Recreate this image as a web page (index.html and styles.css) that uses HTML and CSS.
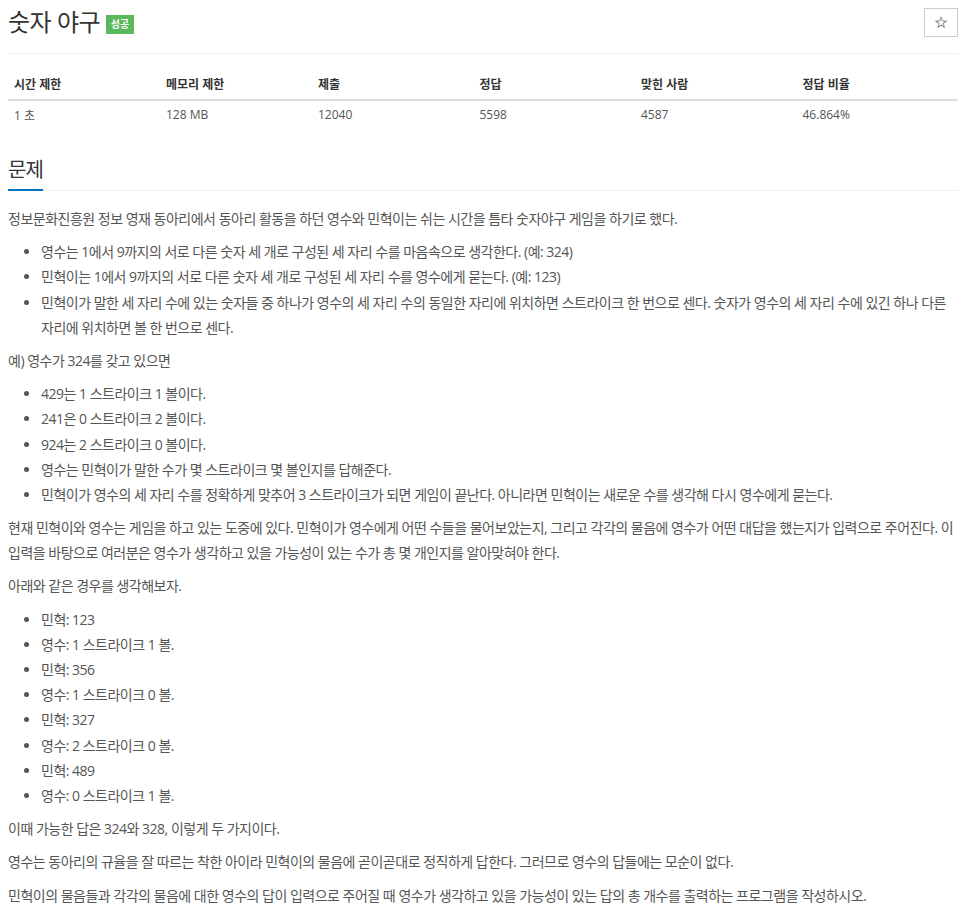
FILE: index.html
```html
<!DOCTYPE html>
<html lang="ko">
<head>
    <meta charset="UTF-8">
    <meta name="viewport" content="width=device-width, initial-scale=1.0">
    <title>숫자 야구</title>
    <link rel="stylesheet" href="styles.css">
</head>
<body>
    <div class="page">
        <div class="page-header">
            <h1 class="title">숫자 야구 <span class="badge">성공</span></h1>
            <button class="star" type="button">&#9734;</button>
        </div>

        <table class="info">
            <thead>
                <tr>
                    <th class="w16">시간 제한</th>
                    <th class="w16">메모리 제한</th>
                    <th class="w17">제출</th>
                    <th class="w17">정답</th>
                    <th class="w17">맞힌 사람</th>
                    <th class="w17">정답 비율</th>
                </tr>
            </thead>
            <tbody>
                <tr>
                    <td>1 초 </td>
                    <td>128 MB</td>
                    <td>12040</td>
                    <td>5598</td>
                    <td>4587</td>
                    <td>46.864%</td>
                </tr>
            </tbody>
        </table>

        <section class="problem">
            <div class="headline">
                <h2>문제</h2>
            </div>
            <div class="problem-text">
                <p>정보문화진흥원 정보 영재 동아리에서 동아리 활동을 하던 영수와 민혁이는 쉬는 시간을 틈타 숫자야구 게임을 하기로 했다.</p>
                <ul>
                    <li>영수는 1에서 9까지의 서로 다른 숫자 세 개로 구성된 세 자리 수를 마음속으로 생각한다. (예: 324)</li>
                    <li>민혁이는 1에서 9까지의 서로 다른 숫자 세 개로 구성된 세 자리 수를 영수에게 묻는다. (예: 123)</li>
                    <li>민혁이가 말한 세 자리 수에 있는 숫자들 중 하나가 영수의 세 자리 수의 동일한 자리에 위치하면 스트라이크 한 번으로 센다. 숫자가 영수의 세 자리 수에 있긴 하나 다른 자리에 위치하면 볼 한 번으로 센다.</li>
                </ul>
                <p>예) 영수가 324를 갖고 있으면</p>
                <ul>
                    <li>429는 1 스트라이크 1 볼이다.</li>
                    <li>241은 0 스트라이크 2 볼이다.</li>
                    <li>924는 2 스트라이크 0 볼이다.</li>
                    <li>영수는 민혁이가 말한 수가 몇 스트라이크 몇 볼인지를 답해준다.</li>
                    <li>민혁이가 영수의 세 자리 수를 정확하게 맞추어 3 스트라이크가 되면 게임이 끝난다. 아니라면 민혁이는 새로운 수를 생각해 다시 영수에게 묻는다.</li>
                </ul>
                <p>현재 민혁이와 영수는 게임을 하고 있는 도중에 있다. 민혁이가 영수에게 어떤 수들을 물어보았는지, 그리고 각각의 물음에 영수가 어떤 대답을 했는지가 입력으로 주어진다. 이 입력을 바탕으로 여러분은 영수가 생각하고 있을 가능성이 있는 수가 총 몇 개인지를 알아맞혀야 한다.</p>
                <p>아래와 같은 경우를 생각해보자.</p>
                <ul>
                    <li>민혁: 123</li>
                    <li>영수: 1 스트라이크 1 볼.</li>
                    <li>민혁: 356</li>
                    <li>영수: 1 스트라이크 0 볼.</li>
                    <li>민혁: 327</li>
                    <li>영수: 2 스트라이크 0 볼.</li>
                    <li>민혁: 489</li>
                    <li>영수: 0 스트라이크 1 볼.</li>
                </ul>
                <p>이때 가능한 답은 324와 328, 이렇게 두 가지이다.</p>
                <p>영수는 동아리의 규율을 잘 따르는 착한 아이라 민혁이의 물음에 곧이곧대로 정직하게 답한다. 그러므로 영수의 답들에는 모순이 없다.</p>
                <p>민혁이의 물음들과 각각의 물음에 대한 영수의 답이 입력으로 주어질 때 영수가 생각하고 있을 가능성이 있는 답의 총 개수를 출력하는 프로그램을 작성하시오.</p>
            </div>
        </section>
    </div>
</body>
</html>
```

FILE: styles.css
```css
* { box-sizing: border-box; }

body {
    margin: 0;
    font-family: "Open Sans", "Noto Sans CJK KR", sans-serif;
    font-size: 14px;
    color: #555;
    background: #fff;
}

.page {
    width: 950px;
    margin-left: 8px;
}

.page-header {
    display: flex;
    justify-content: space-between;
    align-items: flex-start;
    padding-top: 8px;
    padding-bottom: 16px;
    border-bottom: 1px solid #eee;
}

.title {
    margin: 0;
    font-size: 24px;
    font-weight: normal;
    color: #333;
    line-height: 28px;
    letter-spacing: -0.5px;
}

.badge {
    display: inline-block;
    vertical-align: 3px;
    background: #5cb85c;
    color: #fff;
    font-size: 10px;
    font-weight: bold;
    line-height: 19px;
    padding: 0 5px;
    letter-spacing: 0;
}

.star {
    width: 34px;
    height: 29px;
    background: #fff;
    border: 1px solid #ccc;
    color: #333;
    font-size: 14px;
    padding: 0;
    cursor: pointer;
}

.info {
    width: 100%;
    border-collapse: collapse;
    margin-top: 14px;
    font-size: 12px;
}

.info th, .info td {
    text-align: left;
    padding: 0 6px;
}

.info th {
    color: #333;
    font-weight: bold;
    height: 32px;
    vertical-align: middle;
    border-bottom: 2px solid #ddd;
}

.info td {
    height: 28px;
}

.w16 { width: 16%; }
.w17 { width: 17%; }

.problem {
    margin-top: 28px;
}

.headline {
    display: flex;
    border-bottom: 1px dotted #ddd;
    margin-bottom: 15px;
}

.headline h2 {
    margin: 0 0 -1px;
    font-size: 20px;
    font-weight: normal;
    color: #333;
    line-height: 28px;
    letter-spacing: -1px;
    padding-bottom: 5px;
    border-bottom: 2px solid #0076c0;
}

.problem-text {
    line-height: 1.8;
    letter-spacing: -0.5px;
    word-break: keep-all;
}

.problem-text p {
    margin: 0 0 8px;
}

.problem-text ul {
    margin: 1px 0 8px;
    padding-left: 33px;
}
```
